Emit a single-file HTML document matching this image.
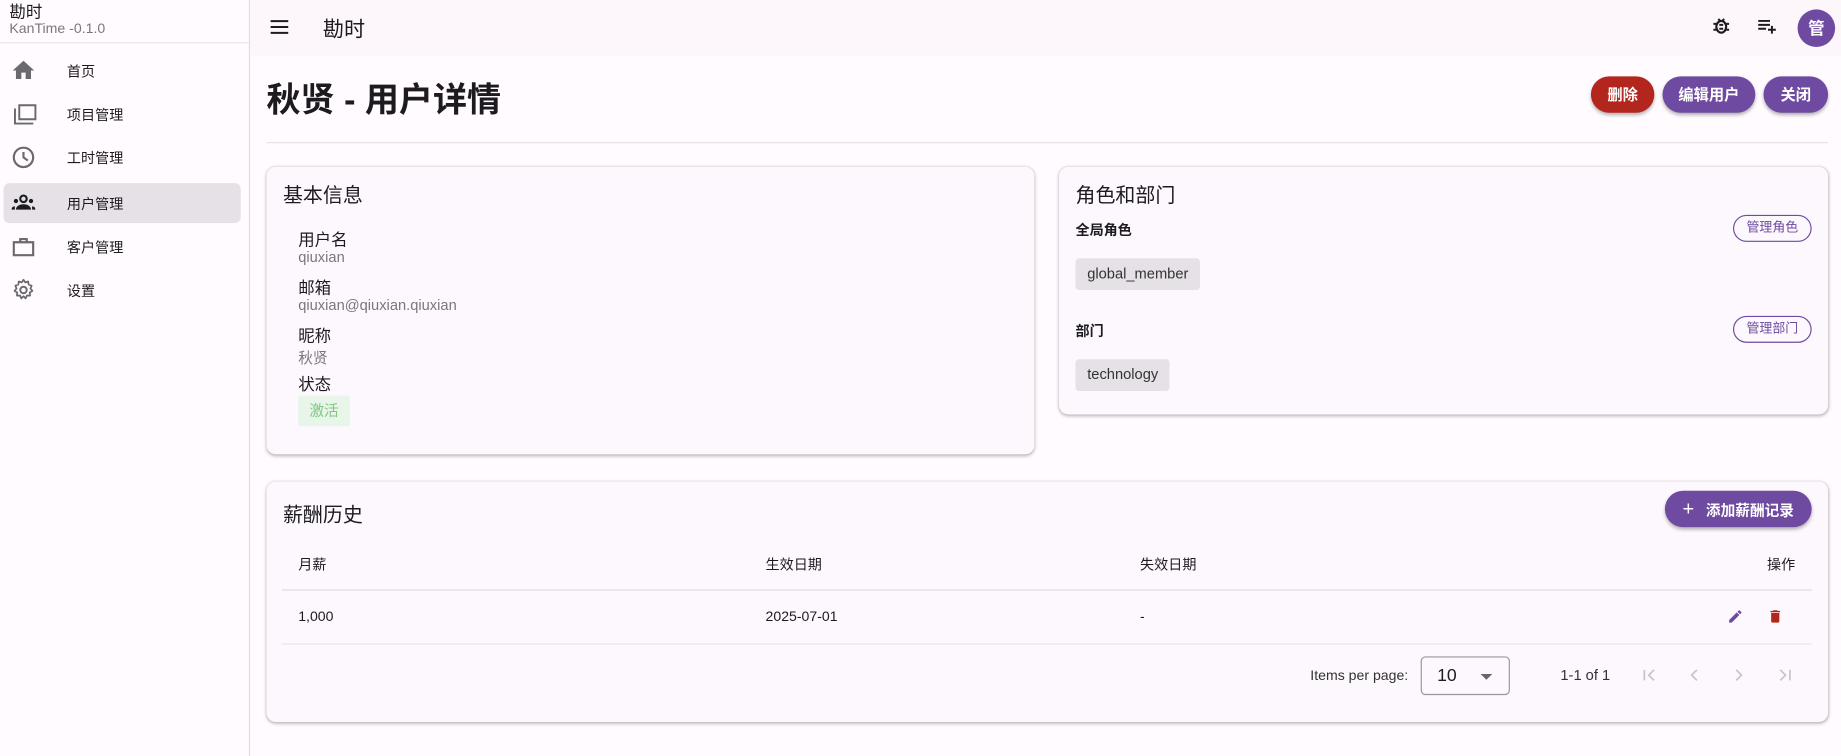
<!DOCTYPE html>
<html><head><meta charset="utf-8">
<style>
*{box-sizing:border-box;margin:0;padding:0}
html,body{width:1841px;height:756px;overflow:hidden;background:#fffbff}
body{font-family:"Liberation Sans","Noto Sans CJK SC",sans-serif;color:#1d1b20}
#w{width:1568px;height:644px;position:relative;transform:scale(1.17411);transform-origin:0 0}
.a{position:absolute}
.side{left:0;top:0;width:213px;height:644px;border-right:1px solid #e0dde2;background:#fffbff}
.nav{left:3px;width:202px;height:34px;border-radius:5px}
.nav span{position:absolute;left:54px;top:9px;font-size:12px;color:#1d1b20}
.nav svg{position:absolute;left:6px;top:6px}
.top{left:213px;top:0;width:1355px;height:48px;background:#fdf7fc}
.btn{height:31px;border-radius:16px;color:#fff;font-size:13px;font-weight:bold;text-align:center;line-height:31px;box-shadow:0 2px 3px rgba(0,0,0,.3);background:#6e4aa0}
.card{background:#fdf8fd;border-radius:8px;box-shadow:0 1px 3px rgba(0,0,0,.3),0 0 1px rgba(0,0,0,.1)}
.h{font-size:17px;color:#1d1b20}
.lab{font-size:14px;color:#1d1b20}
.val{font-size:12.5px;color:#7a767d}
.chip{background:#e5e1e6;border-radius:3px;font-size:12.5px;color:#333;height:27px;line-height:27px;padding:0 10px}
.ob{border:1px solid #6e4aa0;border-radius:12px;color:#6e4aa0;font-size:11px;height:23px;line-height:21px;width:67px;text-align:center}
.t{font-size:12px;color:#1d1b20}
</style></head><body><div id="w">
<div class="a side">
 <div class="a" style="left:8px;top:0;font-size:14px">勘时</div>
 <div class="a" style="left:8px;top:17px;font-size:12px;color:#7a767d">KanTime -0.1.0</div>
 <div class="a" style="left:0;top:36px;width:212px;border-top:1px solid #e8e4ea"></div>
 <div class="a nav" style="top:43px"><svg width="22" height="22" viewBox="0 0 24 24"><path d="M10 20v-6h4v6h5v-8h3L12 3 2 12h3v8z" fill="#6b6870"/></svg><span>首页</span></div>
 <div class="a nav" style="top:80px"><svg width="24" height="22" viewBox="0 0 24 24"><path d="M3 7v14h17M7 4h15v13H7z" fill="none" stroke="#6b6870" stroke-width="1.8"/></svg><span>项目管理</span></div>
 <div class="a nav" style="top:117px"><svg width="22" height="22" viewBox="0 0 24 24"><circle cx="12" cy="12" r="9" fill="none" stroke="#6b6870" stroke-width="2"/><path d="M12 7v5l4 3" fill="none" stroke="#6b6870" stroke-width="2"/></svg><span>工时管理</span></div>
 <div class="a nav" style="top:156px;background:#e5e1e6"><svg width="22" height="22" viewBox="0 0 24 24"><circle cx="12" cy="8" r="3" fill="none" stroke="#1d1b20" stroke-width="2"/><circle cx="5" cy="10" r="2" fill="#1d1b20"/><circle cx="19" cy="10" r="2" fill="#1d1b20"/><path d="M5 18c0-3 3-5 7-5s7 2 7 5zM1 18c0-2 1-3 3-3v3zM23 18c0-2-1-3-3-3v3z" fill="#1d1b20"/></svg><span>用户管理</span></div>
 <div class="a nav" style="top:193px"><svg width="22" height="22" viewBox="0 0 24 24"><path d="M3 8h18v12H3zM9 8V5h6v3" fill="none" stroke="#6b6870" stroke-width="2"/></svg><span>客户管理</span></div>
 <div class="a nav" style="top:230px"><svg width="22" height="22" viewBox="0 0 24 24"><circle cx="12" cy="12" r="3" fill="none" stroke="#6b6870" stroke-width="1.8"/><path d="M12 2.5l1.6 2.4 2.8-.8.4 2.9 2.8 1-1.2 2.6 1.9 2.2-2.5 1.5.3 2.9-2.9-.1-1.2 2.7-2-2-2 2-1.2-2.7-2.9.1.3-2.9-2.5-1.5 1.9-2.2-1.2-2.6 2.8-1 .4-2.9 2.8.8z" fill="none" stroke="#6b6870" stroke-width="1.6" stroke-linejoin="round"/></svg><span>设置</span></div>
</div>
<div class="a top">
 <svg class="a" style="left:15px;top:13px" width="20" height="20" viewBox="0 0 24 24"><path d="M3 6h18M3 12h18M3 18h18" stroke="#1d1b20" stroke-width="2"/></svg>
 <div class="a" style="left:62px;top:11px;font-size:18px">勘时</div>
 <svg class="a" style="left:1243px;top:12px" width="20" height="20" viewBox="0 0 24 24"><ellipse cx="12" cy="13" rx="5" ry="6" fill="none" stroke="#1d1b20" stroke-width="2.2"/><path d="M10 11h4M10 15h4M4 10h3M17 10h3M4 16h3M17 16h3M9 5l2 2M15 5l-2 2" stroke="#1d1b20" stroke-width="2"/></svg>
 <svg class="a" style="left:1282px;top:12px" width="20" height="20" viewBox="0 0 24 24"><path d="M3 7h12M3 11h12M3 15h8M17 12v8M13 16h8" stroke="#1d1b20" stroke-width="2"/></svg>
 <div class="a" style="left:1318px;top:8px;width:32px;height:32px;border-radius:50%;background:#6e4aa0;color:#fff;font-size:14px;font-weight:bold;text-align:center;line-height:32px">管</div>
</div>
<div class="a" style="left:227px;top:62px;font-size:29px;font-weight:bold">秋贤 - 用户详情</div>
<div class="a btn" style="left:1355px;top:65px;width:54px;background:#b3261e">删除</div>
<div class="a btn" style="left:1416px;top:65px;width:79px">编辑用户</div>
<div class="a btn" style="left:1502px;top:65px;width:55px">关闭</div>
<div class="a" style="left:227px;top:121px;width:1330px;border-top:1px solid #e6e1e6"></div>

<div class="a card" style="left:227px;top:142px;width:654px;height:245px">
 <div class="a h" style="left:14px;top:10px">基本信息</div>
 <div class="a lab" style="left:27px;top:52px">用户名</div><div class="a val" style="left:27px;top:70px">qiuxian</div>
 <div class="a lab" style="left:27px;top:93px">邮箱</div><div class="a val" style="left:27px;top:111px">qiuxian@qiuxian.qiuxian</div>
 <div class="a lab" style="left:27px;top:134px">昵称</div><div class="a val" style="left:27px;top:152px">秋贤</div>
 <div class="a lab" style="left:27px;top:175px">状态</div>
 <div class="a" style="left:27px;top:195px;width:44px;height:26px;background:#e8f5e9;border-radius:2px;color:#81c784;font-size:12.5px;text-align:center;line-height:26px">激活</div>
</div>
<div class="a card" style="left:902px;top:142px;width:655px;height:211px">
 <div class="a h" style="left:14px;top:10px">角色和部门</div>
 <div class="a" style="left:14px;top:45px;font-size:12px;font-weight:bold">全局角色</div>
 <div class="a ob" style="left:574px;top:41px">管理角色</div>
 <div class="a chip" style="left:14px;top:78px">global_member</div>
 <div class="a" style="left:14px;top:131px;font-size:12px;font-weight:bold">部门</div>
 <div class="a ob" style="left:574px;top:127px">管理部门</div>
 <div class="a chip" style="left:14px;top:164px">technology</div>
</div>
<div class="a card" style="left:227px;top:410px;width:1330px;height:205px">
 <div class="a h" style="left:14px;top:14px">薪酬历史</div>
 <div class="a btn" style="left:1191px;top:8px;width:125px;font-size:12.5px"><span style="font-size:17px;font-weight:normal;margin-right:10px">+</span>添加薪酬记录</div>
 <div class="a t" style="left:27px;top:62px">月薪</div>
 <div class="a t" style="left:425px;top:62px">生效日期</div>
 <div class="a t" style="left:744px;top:62px">失效日期</div>
 <div class="a t" style="left:1278px;top:62px">操作</div>
 <div class="a" style="left:13px;top:92px;width:1303px;border-top:1px solid #ddd9de"></div>
 <div class="a t" style="left:27px;top:108px">1,000</div>
 <div class="a t" style="left:425px;top:108px">2025-07-01</div>
 <div class="a t" style="left:744px;top:108px">-</div>
 <svg class="a" style="left:1244px;top:108px" width="14" height="14" viewBox="0 0 24 24"><path d="M3 17.25V21h3.75L17.81 9.94l-3.75-3.75zM20.71 7.04a1 1 0 000-1.41l-2.34-2.34a1 1 0 00-1.41 0l-1.83 1.83 3.75 3.75z" fill="#6e4aa0"/></svg>
 <svg class="a" style="left:1278px;top:108px" width="14" height="14" viewBox="0 0 24 24"><path d="M6 19c0 1.1.9 2 2 2h8c1.1 0 2-.9 2-2V7H6zM19 4h-3.5l-1-1h-5l-1 1H5v2h14z" fill="#b3261e"/></svg>
 <div class="a" style="left:13px;top:138px;width:1303px;border-top:1px solid #e8e4e9"></div>
 <div class="a" style="left:889px;top:158px;font-size:12px;color:#333">Items per page:</div>
 <div class="a" style="left:983px;top:149px;width:76px;height:33px;border:1px solid #9a969c;border-radius:4px"><span class="a" style="left:13px;top:7px;font-size:15px">10</span><span class="a" style="left:50px;top:14px;border:5px solid transparent;border-top-color:#666;border-bottom:0"></span></div>
 <div class="a" style="left:1102px;top:158px;font-size:12.5px;color:#333">1-1 of 1</div>
 <svg class="a" style="left:1169px;top:156px" width="18" height="18" viewBox="0 0 24 24"><path d="M6 6v12M17 6l-6 6 6 6" fill="none" stroke="#c9c5cb" stroke-width="2"/></svg>
 <svg class="a" style="left:1207px;top:156px" width="18" height="18" viewBox="0 0 24 24"><path d="M15 6l-6 6 6 6" fill="none" stroke="#c9c5cb" stroke-width="2"/></svg>
 <svg class="a" style="left:1245px;top:156px" width="18" height="18" viewBox="0 0 24 24"><path d="M9 6l6 6-6 6" fill="none" stroke="#c9c5cb" stroke-width="2"/></svg>
 <svg class="a" style="left:1284px;top:156px" width="18" height="18" viewBox="0 0 24 24"><path d="M18 6v12M7 6l6 6-6 6" fill="none" stroke="#c9c5cb" stroke-width="2"/></svg>
</div>
</div></body></html>
